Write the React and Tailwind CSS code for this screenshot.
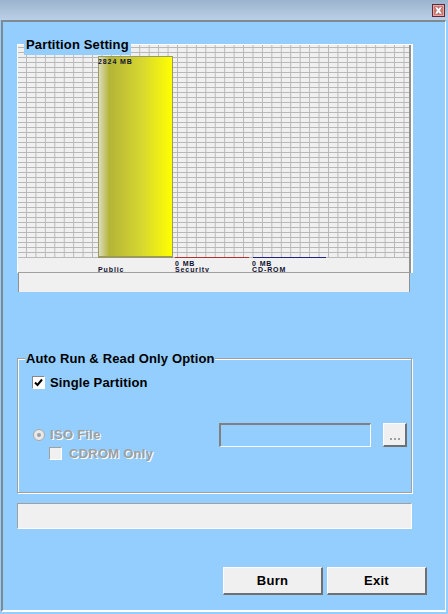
const gridBg =
  "bg-[#f0f0f0] bg-[linear-gradient(to_right,#b8b8b8_1px,transparent_1px),linear-gradient(to_bottom,#b8b8b8_1px,transparent_1px)] bg-[length:9.45px_5px,9.45px_5px] bg-[position:8px_0,0_2px]";

function Legend({ children, className }) {
  return (
    <span className={"absolute whitespace-nowrap bg-[#94ceff] font-bold text-[13px] leading-[15px] tracking-[0.14px] text-black " + className}>
      {children}
    </span>
  );
}

function Tiny({ children }) {
  return <div className="text-[7px] font-bold leading-[6px] tracking-[0.9px] whitespace-nowrap text-[#101030]">{children}</div>;
}

export default function App() {
  return (
    <div className="w-[448px] h-[614px] bg-[#94ceff] overflow-hidden flex flex-col font-['Liberation_Sans',sans-serif]">
      {/* title bar */}
      <div className="h-[20px] shrink-0 bg-gradient-to-b from-[#9cb3cd] to-[#bad0e8] flex justify-end items-start pt-[4px] pr-[3px]">
        <div className="w-[13px] h-[13px] border border-[#5c2a3c] bg-[#d9756c] shadow-[inset_0_0_0_1px_#e8a8a0] flex items-center justify-center">
          <svg width="9" height="7" viewBox="0 0 9 7">
            <path d="M0.500 0h3l1 1.500 1-1.500h3L6.200 3.500 8.500 7h-3l-1-1.500-1 1.500h-3l2.300-3.500z" fill="#ffffff" stroke="#503040" strokeWidth="0.4" />
          </svg>
        </div>
      </div>
      {/* window client area */}
      <div className="ml-[1px] mr-[2px] mb-[2px] h-[592px] border-t-2 border-l-2 border-r border-b-2 border-t-[#808890] border-l-[#808890] border-r-white border-b-white pl-[14px] flex flex-col">
        {/* Partition Setting */}
        <div className="relative mt-[22px] w-[396px] h-[229px] border-t border-l border-r-2 border-white flex flex-col">
          <Legend className="left-[6px] top-[-8px] pl-[2px] h-[18px] w-[107px]">Partition Setting</Legend>
          <div className={"h-[213px] border-r-2 border-r-[#909090] flex items-end pl-[80px] " + gridBg}>
            <div className="w-[75px] h-[202px] border border-[#9a9a60] border-b-2 bg-[linear-gradient(to_right,#dcdcc0_0%,#b4b438_14%,#d8d830_60%,#ffff00_100%)]">
              <div className="mt-[2px] -ml-px"><Tiny>2824 MB</Tiny></div>
            </div>
            <div className="ml-[2px] w-[74px] h-[1px] bg-[#b03030]" />
            <div className="ml-[4px] w-[73px] h-[1px] bg-[#202080]" />
          </div>
          <div className="h-[15px] bg-[#f0f0f0] border-r-2 border-r-[#909090] border-b border-b-[#a0a0a0] flex pl-[80px] overflow-hidden">
            <div className="w-[77px] pt-[9px]"><Tiny>Public</Tiny></div>
            <div className="w-[77px] pt-[3px]"><Tiny>0 MB</Tiny><Tiny>Security</Tiny></div>
            <div className="pt-[3px]"><Tiny>0 MB</Tiny><Tiny>CD-ROM</Tiny></div>
          </div>
        </div>
        {/* progress 1 */}
        <div className="ml-[1px] w-[392px] h-[19px] bg-[#f0f0f0] border-l border-r border-[#909090]" />

        {/* Auto Run group */}
        <div className="relative mt-[66px] w-[395px] h-[135px] border border-[#a0a0a0] shadow-[inset_1px_1px_0_#ffffff,1px_1px_0_#ffffff] pl-[14px]">
          <Legend className="left-[7px] top-[-8px] px-[1px] h-[15px] w-[190px]">Auto Run &amp; Read Only Option</Legend>
          <label className="mt-[17px] flex items-center h-[13px] gap-[5px]">
            <span className="w-[13px] h-[13px] bg-white border border-[#888888] border-b-white border-r-white flex items-center justify-center">
              <svg width="9" height="9" viewBox="0 0 9 9">
                <path d="M1 4.500l2.500 2.500L8 1.500" fill="none" stroke="#000" strokeWidth="2" />
              </svg>
            </span>
            <span className="text-[13px] font-bold tracking-[0.14px] text-black">Single Partition</span>
          </label>
          <div className="mt-[39px] flex items-start">
            <div className="w-[187px]">
              <div className="flex items-center h-[13px] gap-[5px] pl-[1px]">
                <span className="w-[12px] h-[12px] rounded-full bg-[#e8e8e8] border border-[#a8a8a8] flex items-center justify-center">
                  <span className="w-[4px] h-[4px] rounded-full bg-[#a0a0a0]" />
                </span>
                <span className="text-[13px] font-bold tracking-[0.3px] text-[#a0a0a0] [text-shadow:1px_1px_0_#ffffff]">ISO File</span>
              </div>
              <div className="mt-[6px] ml-[17px] flex items-center h-[13px] gap-[7px]">
                <span className="w-[13px] h-[13px] bg-[#f0f0f0] border border-[#a0a0a0] border-b-white border-r-white" />
                <span className="text-[13px] font-bold tracking-[0.25px] text-[#a0a0a0] [text-shadow:1px_1px_0_#ffffff]">CDROM Only</span>
              </div>
            </div>
            <div className="-mt-[5px] w-[152px] h-[24px] border-t-2 border-l-2 border-r border-b border-t-[#808080] border-l-[#808080] border-r-white border-b-white" />
            <div className="-mt-[5px] ml-[12px] w-[24px] h-[24px] bg-[#f0f0f0] border-t border-l border-r-2 border-b-2 border-t-white border-l-white border-r-[#707070] border-b-[#707070] flex items-end justify-center pb-[5px] gap-[2px]">
              <span className="w-[2px] h-[2px] bg-[#a0a0a0]" />
              <span className="w-[2px] h-[2px] bg-[#a0a0a0]" />
              <span className="w-[2px] h-[2px] bg-[#a0a0a0]" />
            </div>
          </div>
        </div>

        {/* progress 2 */}
        <div className="mt-[10px] w-[395px] h-[26px] bg-[#f0f0f0] border-t border-l border-r border-b border-t-[#a0a0a0] border-l-[#a0a0a0] border-r-white border-b-white" />

        {/* buttons */}
        <div className="mt-[38px] ml-[206px] flex gap-[4px]">
          {["Burn", "Exit"].map((t) => (
            <button
              key={t}
              className="w-[100px] h-[28px] bg-[#f0f0f0] border-t border-l border-r-2 border-b-2 border-t-white border-l-white border-r-[#707070] border-b-[#707070] text-[13px] font-bold tracking-[0.25px] text-black"
            >
              {t}
            </button>
          ))}
        </div>
      </div>
    </div>
  );
}
